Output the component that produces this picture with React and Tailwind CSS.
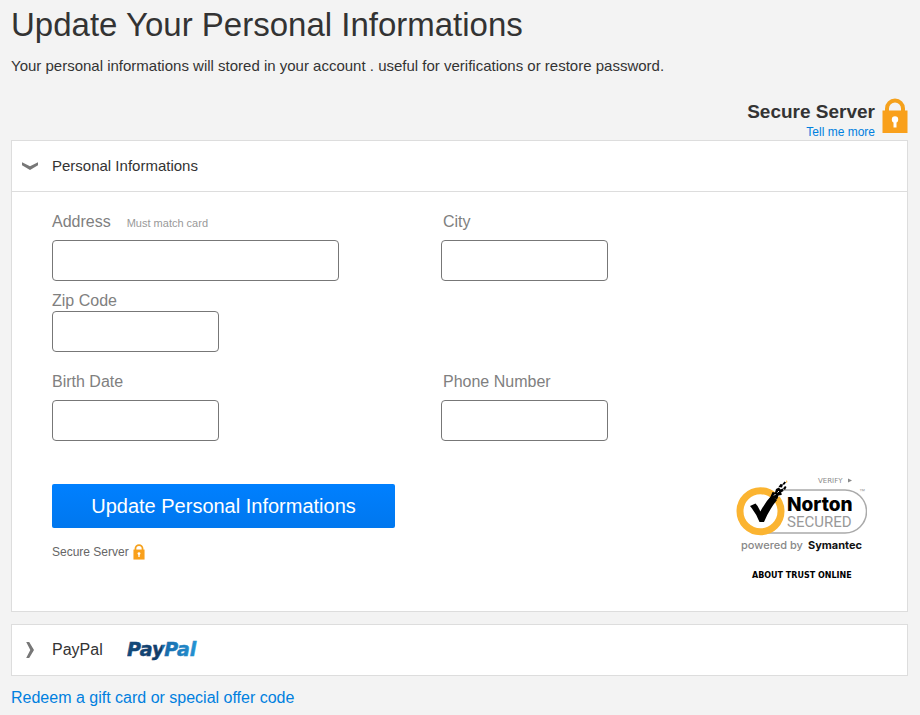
import { useState } from 'react'

function LockIcon({ className }) {
  return (
    <svg viewBox="0 0 26 36" className={className} aria-hidden="true">
      <path d="M5 14V10.500a8 8 0 0 1 16 0V14" fill="none" stroke="#f5a11c" strokeWidth="4" />
      <rect x="0.500" y="12.500" width="25" height="22.500" fill="#f9a01b" />
      <circle cx="13" cy="21.500" r="3.200" fill="#fff" />
      <path d="M11.500 22h3v7.500h-3z" fill="#fff" />
    </svg>
  )
}

function ChevronIcon({ className }) {
  return (
    <svg viewBox="0 0 18 10" className={className} aria-hidden="true">
      <path d="M1 1.200 9 5.300l8-4.100v3L9 9 1 4.200z" fill="#777" />
    </svg>
  )
}

function NortonSeal() {
  return (
    <svg viewBox="-1 0 132 112" className="block h-28 w-33" role="img" aria-label="Norton Secured, powered by Symantec">
      <text x="82" y="8" fontSize="7" fill="#888" fontFamily="'DejaVu Sans', sans-serif">VERIFY</text>
      <path d="M112 3.500l4 2-4 2z" fill="#888" />
      <path d="M40 15h69a21.500 21.500 0 0 1 0 43H32" fill="none" stroke="#aaa" strokeWidth="1.500" />
      <circle cx="24.500" cy="36.300" r="20.500" fill="#fff" stroke="#fbb431" strokeWidth="7" />
      <path
        d="M14 31l5.500-2.500q2.700 2.500 4.800 8 5-9.500 11.200-16l5.500 4.500q-7.500 9-13 22h-4.500q-3.500-9-9.500-16z"
        fill="#000"
      />
      <path
        d="M34.500 21.500l2-4.500 2.500.500 1-3.500 3-1.500 1.500 2 2.500-1 .500 2.500-2.500 1.500 1 2-3.500 1.500-1.500 3.500zM42.500 12l2-3 2.500.500-1 3zM47 13.500l2-2.500 1.500 1-1.500 3zM46.500 9l2-2.500 1.500 1-2 2.500z"
        fill="#000"
      />
      <path d="M38 20.500l1.500-1.500M41.500 17.500l1.500-1.500M42 21.500l1.500-1" stroke="#fff" strokeWidth="1" />
      <path d="M50 8l.500-3 1 2z" fill="#fbb431" />
      <text x="51" y="36" fontSize="19" fontWeight="800" fill="#000" fontFamily="Inter, sans-serif">Norton</text>
      <text x="51" y="52" fontSize="15" fill="#999" fontFamily="Roboto, sans-serif">SECURED</text>
      <text x="123" y="18" fontSize="6" fill="#999" fontFamily="'Liberation Sans', sans-serif">™</text>
      <text x="5" y="74" fontSize="11" fontWeight="500" fill="#888" fontFamily="Inter, sans-serif">powered by</text>
      <text x="72" y="74" fontSize="11" fontWeight="700" fill="#111" fontFamily="Inter, sans-serif">Symantec</text>
      <text x="16" y="103" fontSize="8" fontWeight="700" fill="#000" fontFamily="'DejaVu Sans', sans-serif">ABOUT TRUST ONLINE</text>
    </svg>
  )
}

function PayPalLogo() {
  return (
    <svg viewBox="0 0 78 26" className="h-6.5 w-19.5" role="img" aria-label="PayPal">
      <defs>
        <linearGradient id="pay" x1="0" x2="1">
          <stop offset="0" stopColor="#134b7c" />
          <stop offset="0.500" stopColor="#123c68" />
          <stop offset="0.501" stopColor="#1668a8" />
          <stop offset="1" stopColor="#2494d4" />
        </linearGradient>
      </defs>
      <text
        x="0"
        y="19"
        fontSize="19"
        fontWeight="700"
        fontStyle="italic"
        fill="url(#pay)"
        stroke="url(#pay)"
        strokeWidth="0.500"
        fontFamily="'DejaVu Sans', sans-serif"
      >
        PayPal
      </text>
    </svg>
  )
}

function Field({ id, label, hint, wide, tight, indent }) {
  return (
    <div>
      <div className={tight ? 'flex items-center gap-4' : 'mb-2 flex items-center gap-4'}>
        <label htmlFor={id} className={indent ? 'pl-0.5 leading-5' : 'leading-5'}>{label}</label>
        {hint && <span className="pt-0.5 text-[11px] leading-4 text-[#999]">{hint}</span>}
      </div>
      <input
        id={id}
        type="text"
        className={`block h-[41px] rounded-sm border border-[#777] bg-white px-3 text-[#333] ${wide ? 'w-[287px]' : 'w-[167px]'}`}
      />
    </div>
  )
}

export default function App() {
  const [open, setOpen] = useState(true)

  return (
    <main className="min-h-screen bg-[#f3f3f3] pr-3 pb-1 pl-[11px] font-['Liberation_Sans',Arial,sans-serif] text-base text-[#333]">
      <h1 className="pt-1 text-[33px] leading-[42px]">Update Your Personal Informations</h1>
      <p className="mt-2.5 text-[15px] leading-5">
        Your personal informations will stored in your account . useful for verifications or restore password.
      </p>

      <div className="mt-5.5 flex items-end justify-end gap-[7px]">
        <div className="text-right">
          <p className="text-[19px] leading-5 font-bold">Secure Server</p>
          <a href="#secure" className="mt-0.5 block text-xs leading-4 text-[#0080df]">Tell me more</a>
        </div>
        <LockIcon className="mb-1.5 h-9 w-6.5" />
      </div>

      <section className="border border-[#ddd] bg-white">
        <h2>
          <button
            type="button"
            aria-expanded={open}
            onClick={() => setOpen(!open)}
            className="flex h-[51px] w-full items-center gap-3 border-b border-[#ddd] pl-[9px] text-left"
          >
            <ChevronIcon className="h-2.5 w-[18px]" />
            <span className="pl-px text-[15px]">Personal Informations</span>
          </button>
        </h2>

        {open && (
          <form className="px-10 pt-5 pb-6 text-[#808080]" onSubmit={(e) => e.preventDefault()}>
            <div className="grid grid-cols-[389px_1fr]">
              <Field id="address" label="Address" hint="Must match card" wide />
              <Field id="city" label="City" indent />
            </div>
            <div className="mt-2.5">
              <Field id="zip" label="Zip Code" tight />
            </div>
            <div className="mt-5 grid grid-cols-[389px_1fr]">
              <Field id="birth" label="Birth Date" />
              <Field id="phone" label="Phone Number" indent />
            </div>

            <div className="mt-[34px] flex items-start justify-between">
              <div className="pt-[9px]">
                <button
                  type="submit"
                  className="block h-11 w-[343px] rounded-xs bg-linear-to-b from-[#0080ff] to-[#0077ee] text-xl text-white"
                >
                  Update Personal Informations
                </button>
                <p className="mt-3.5 flex items-center gap-1 text-xs leading-5 text-[#666]">
                  Secure Server
                  <LockIcon className="h-4 w-3" />
                </p>
              </div>
              <NortonSeal />
            </div>
          </form>
        )}
      </section>

      <section className="mt-3 border border-[#ddd] bg-white">
        <button type="button" className="flex h-[50px] w-full items-center gap-3 pl-[9px] text-left">
          <ChevronIcon className="h-2.5 w-[18px] -rotate-90" />
          <span className="pl-px">PayPal</span>
          <span className="pl-3"><PayPalLogo /></span>
        </button>
      </section>

      <a href="#redeem" className="mt-3 block leading-5 text-[#0080df]">Redeem a gift card or special offer code</a>
    </main>
  )
}
